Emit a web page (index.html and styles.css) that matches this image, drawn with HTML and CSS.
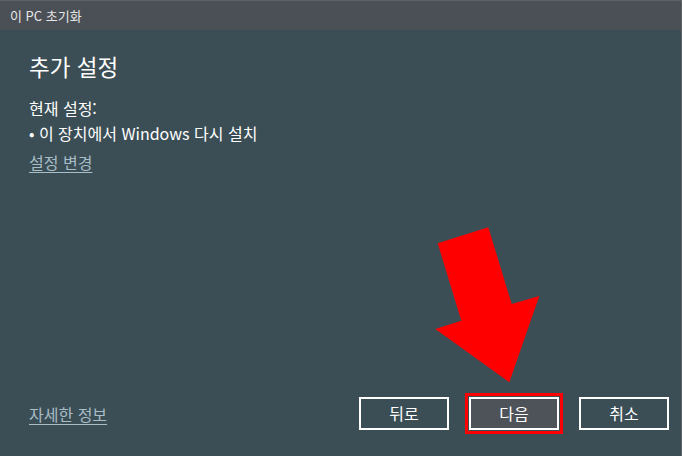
FILE: index.html
```html
<!DOCTYPE html>
<html lang="ko">
<head>
<meta charset="utf-8">
<title>이 PC 초기화</title>
<link rel="stylesheet" href="styles.css">
</head>
<body>
<div class="window">
  <div class="titlebar">이 PC 초기화</div>
  <div class="content">
    <h1 class="heading">추가 설정</h1>
    <div class="settings">
      <div class="line">현재 설정:</div>
      <div class="line">• 이 장치에서 Windows 다시 설치</div>
    </div>
    <a class="link change" href="#">설정 변경</a>
    <div class="footer">
      <a class="link" href="#">자세한 정보</a>
      <div class="buttons">
        <button class="btn">뒤로</button>
        <button class="btn btn-focus">다음</button>
        <button class="btn">취소</button>
      </div>
    </div>
  </div>
  <svg class="arrow" width="682" height="456" viewBox="0 0 682 456">
    <polygon points="437.7,243.3 488.3,227.3 511.7,304 539.3,296 509.3,382.3 435.3,329 461.3,320.7" fill="#ff0000"/>
  </svg>
</div>
</body>
</html>
```
FILE: styles.css
```css
html, body {
  margin: 0;
  padding: 0;
  background: #3b4e56;
}
body {
  font-family: "Noto Sans CJK KR", "Noto Sans", sans-serif;
  color: #ffffff;
}
.window {
  position: relative;
  width: 682px;
  height: 456px;
  box-sizing: border-box;
  display: flex;
  flex-direction: column;
  background: #3b4e56;
  border-top: 1px solid #5e6368;
  border-right: 1px solid #5e6368;
  overflow: hidden;
}
.titlebar {
  height: 29px;
  line-height: 29px;
  padding-left: 10px;
  font-size: 13px;
  color: #e6e6e6;
  background: #4b5056;
  flex: none;
}
.content {
  flex: 1;
  display: flex;
  flex-direction: column;
  align-items: flex-start;
  padding: 20px 12px 26px 29px;
}
.heading {
  margin: 0;
  font-size: 22.5px;
  font-weight: 400;
  line-height: 32px;
}
.settings {
  margin-top: 14px;
  font-size: 16px;
  line-height: 25px;
}
.link {
  font-size: 16px;
  line-height: 24px;
  color: #a9bdc7;
  text-decoration: underline;
  text-underline-offset: 3px;
  text-decoration-thickness: 1px;
}
.change {
  margin-top: 4px;
}
.footer {
  margin-top: auto;
  align-self: stretch;
  display: flex;
  align-items: center;
  justify-content: space-between;
}
.buttons {
  display: flex;
  gap: 20px;
}
.btn {
  width: 90px;
  height: 33px;
  box-sizing: border-box;
  border: 2px solid #ffffff;
  background: #3b4e56;
  color: #ffffff;
  font-family: "Noto Sans CJK KR", "Noto Sans", sans-serif;
  font-size: 16px;
  line-height: 27px;
  padding: 0;
}
.btn-focus {
  background: #4d5358;
  outline: 3px solid #ff0000;
  outline-offset: 1px;
}
.arrow {
  position: absolute;
  left: 0;
  top: -1px;
  pointer-events: none;
}
```
